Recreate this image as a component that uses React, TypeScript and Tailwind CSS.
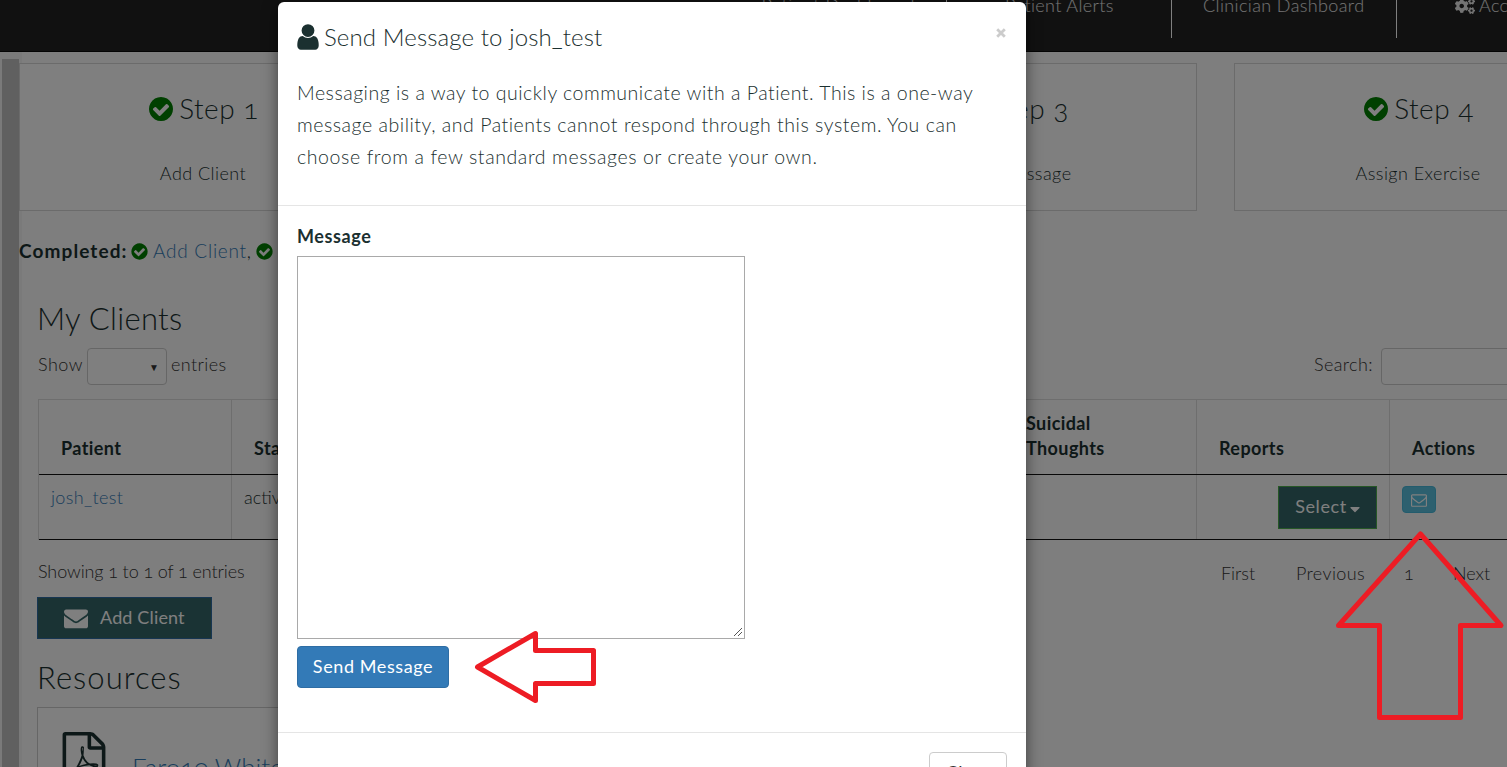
import React from "react";
import { FaCogs, FaCaretDown } from "react-icons/fa";

function Glyph({ d, className }: { d: string; className: string }) {
  return (
    <svg viewBox="0 0 1792 1792" fill="currentColor" className={className} aria-hidden="true">
      <path d={d} />
    </svg>
  );
}

const CHECK =
  "M1412 734q0-28-18-46l-91-90q-19-19-45-19t-45 19l-408 407-226-226q-19-19-45-19t-45 19l-91 90q-18 18-18 46 0 27 18 45l362 362q19 19 45 19 27 0 46-19l543-543q18-18 18-45zm252 162q0 209-103 385.5t-279.5 279.5-385.5 103-385.5-103-279.5-279.5-103-385.5 103-385.5 279.5-279.5 385.5-103 385.5 103 279.5 279.5 103 385.5z";
const USER =
  "M1536 1399q0 109-62.5 187t-150.5 78h-854q-88 0-150.5-78t-62.5-187q0-85 8.5-160.5t31.5-152 58.5-131 94-89 134.5-34.5q131 128 313 128t313-128q76 0 134.5 34.5t94 89 58.5 131 31.5 152 8.5 160.5zm-256-887q0 159-112.5 271.5t-271.5 112.5-271.5-112.5-112.5-271.5 112.5-271.5 271.5-112.5 271.5 112.5 112.5 271.5z";
const ENVELOPE =
  "M1792 710v794q0 66-47 113t-113 47h-1472q-66 0-113-47t-47-113v-794q44 49 101 87 362 246 497 345 57 42 92.5 65.5t94.5 48 110 24.5h2q51 0 110-24.5t94.5-48 92.5-65.5q170-123 498-345 57-39 100-87zm0-294q0 79-49 151t-122 123q-376 261-468 325-10 7-42.5 31t-54 38.5-52 32.5-57.5 27-50 9h-2q-23 0-50-9t-57.5-27-52-32.5-54-38.5-42.5-31q-91-64-262-182.5t-205-142.5q-62-42-117-115.5t-55-136.5q0-78 41.5-130t118.5-52h1472q65 0 112.5 47t47.5 113z";
const ENVELOPE_O =
  "M1664 1504v-768q-32 36-69 66-268 206-426 338-51 43-83 67t-86.5 48.5-102.5 24.5h-2q-48 0-102.5-24.5t-86.5-48.5-83-67q-158-132-426-338-37-30-69-66v768q0 13 9.5 22.5t22.5 9.5h1472q13 0 22.5-9.5t9.5-22.5zm0-1051v-24.5l-.5-13-3-12.5-5.5-9-9-7.5-14-2.5h-1472q-13 0-22.5 9.5t-9.5 22.5q0 168 147 284 193 152 401 317 6 5 35 29.5t46 37.5 44.5 31.5 50.5 27.5 43 9h2q20 0 43-9t50.5-27.5 44.5-31.5 46-37.5 35-29.5q208-165 401-317 54-43 100.5-115.5t46.5-131.5zm128-37v1088q0 66-47 113t-113 47h-1472q-66 0-113-47t-47-113v-1088q0-66 47-113t113-47h1472q66 0 113 47t47 113z";
const FILE_PDF =
  "M1596 380q28 28 48 76t20 88v1152q0 40-28 68t-68 28h-1344q-40 0-68-28t-28-68v-1600q0-40 28-68t68-28h896q40 0 88 20t76 48zm-444-244v376h376q-10-29-22-41l-313-313q-12-12-41-22zm384 1528v-1024h-416q-40 0-68-28t-28-68v-416h-768v1536h1280zm-514-593q33 26 84 56 59-7 117-7 147 0 177 49 16 22 2 52 0 1-1 2l-2 2v1q-6 38-71 38-48 0-115-20t-130-53q-221 24-392 83-153 262-242 262-15 0-28-7l-24-12q-1-1-6-5-10-10-6-36 9-40 56-91.5t132-96.5q14-9 23 6 2 2 2 4 52-85 107-197 68-136 104-262-24-82-30.5-159.5t6.5-127.5q11-40 42-40h22q23 0 35 15 18 21 9 68-2 6-4 8 1 3 1 8v30q-2 123-14 192 55 164 146 238zm-576 411q52-24 137-158-51 40-87.5 84t-49.5 74zm398-920q-15 42-2 132 1-7 7-44 0-3 7-43 1-4 4-8-1-1-1-2-1-2-1-3-1-22-13-36 0 1-1 2v2zm-124 661q135-54 284-81-2-1-13-9.5t-16-13.5q-76-67-127-176-27 86-83 197-30 56-45 83zm646-16q-24-24-140-24 76 28 124 28 14 0 18-1 0-1-2-3z";

const steps = [
  { title: "Step 1", label: "Add Client" },
  { title: "Step 2", label: "" },
  { title: "Step 3", label: "Send Message" },
  { title: "Step 4", label: "Assign Exercise" },
];

const columns = ["Patient", "Status", "", "", "", "Suicidal Thoughts", "Reports", "Actions"];

function NavBar() {
  return (
    <header className="flex h-[52px] shrink-0 items-start border-b border-[#080808] bg-[#222] text-lg leading-5 text-white/90">
      <div className="flex h-[38px] w-[947px] shrink-0 justify-end border-r border-white pr-[31px]">
        <span className="-mt-[5px] tracking-[0.6px]">Patient Dashboard</span>
      </div>
      <div className="flex h-[38px] w-[225px] shrink-0 border-r border-white pl-[58px]">
        <span className="-mt-[5px] tracking-[0.35px]">Patient Alerts</span>
      </div>
      <div className="flex h-[38px] w-[225px] shrink-0 border-r border-white pl-[31px]">
        <span className="-mt-[5px] tracking-[0.38px]">Clinician Dashboard</span>
      </div>
      <div className="flex shrink-0 gap-1 pl-[58px]">
        <FaCogs className="-mt-[3px] h-[18px] w-5" />
        <span className="-mt-[5px] tracking-[0.35px]">Account</span>
      </div>
    </header>
  );
}

function Steps() {
  return (
    <section className="flex gap-[37px] pt-[11px]">
      {steps.map((s) => (
        <div key={s.title} className="flex h-[148px] w-[368px] shrink-0 flex-col items-center border border-[#d6d6d6] bg-white">
          <div className="mt-[26px] flex h-9 items-center gap-1">
            <Glyph d={CHECK} className="mt-0.5 h-7 w-7 text-[#008000]" />
            <span className="text-[28px] tracking-[0.5px]">{s.title}</span>
          </div>
          <div className="mt-[33px] text-lg tracking-[0.45px]">{s.label}</div>
        </div>
      ))}
    </section>
  );
}

function ClientsTable() {
  return (
    <div className="mt-3.5 w-[1546px] border-l border-t border-[#ddd]">
      <div className="flex h-[75px] border-b border-[#111]">
        {columns.map((c, i) => (
          <div key={i} className="flex w-[193px] shrink-0 items-end border-r border-[#ddd] pb-[13px] pl-[22px] pr-8 text-lg font-bold leading-[25px] tracking-[0.4px]">
            {c}
          </div>
        ))}
      </div>
      <div className="flex h-[65px] border-b border-[#111] text-lg">
        <div className="w-[193px] shrink-0 border-r border-[#ddd] pl-3 pt-2 tracking-[0.35px] text-[#337ab7]">josh_test</div>
        <div className="w-[193px] shrink-0 border-r border-[#ddd] pl-3 pt-2">active</div>
        {[2, 3, 4, 5].map((i) => (
          <div key={i} className="w-[193px] shrink-0 border-r border-[#ddd]" />
        ))}
        <div className="flex w-[193px] shrink-0 justify-end border-r border-[#ddd] pr-3 pt-[11px]">
          <button className="flex h-[43px] w-[99px] items-center justify-center gap-[3px] border border-[#4cae4c] bg-[#356668] pb-[3px] font-normal tracking-[0.6px] text-white">
            Select <FaCaretDown className="mt-[5px] h-4 w-2.5" />
          </button>
        </div>
        <div className="w-[193px] shrink-0 pl-3 pt-[11px]">
          <button className="flex h-[27px] w-[34px] items-center justify-center rounded border border-[#46b8da] bg-[#5bc0de] text-white">
            <Glyph d={ENVELOPE_O} className="h-4 w-4" />
          </button>
        </div>
      </div>
    </div>
  );
}

function Dashboard() {
  return (
    <div className="flex h-[715px]">
      <div className="w-[19px] shrink-0 bg-[#f4f4f4] pl-0.5 pt-[7px]">
        <div className="h-full bg-[#c1c1c1]" />
      </div>
      <main className="min-w-0 flex-1 bg-[linear-gradient(to_right,#f5f5f5_3px,#fcfcfc_3px)]">
        <Steps />
        <div className="mt-[26px] flex h-7 items-center text-[19px]">
          <span className="w-[111px] font-bold tracking-[1.1px]">Completed:</span>
          <Glyph d={CHECK} className="h-[19px] w-[19px] shrink-0 text-[#008000]" />
          <span className="ml-1 tracking-[0.75px] text-[#337ab7]">Add Client</span>
          <span>,</span>
          <Glyph d={CHECK} className="ml-1 h-[19px] w-[19px] shrink-0 text-[#008000]" />
        </div>
        <div className="pl-[19px]">
          <h2 className="-ml-px mt-[35px] h-9 text-[31px] leading-9 tracking-[0.3px]">My Clients</h2>
          <div className="mt-3 flex h-[37px] text-lg leading-[33px] text-[#333]">
            <span className="w-[49px] shrink-0 tracking-[0.5px]">Show</span>
            <div className="flex w-20 shrink-0 items-center justify-end rounded border border-[#ccc] bg-white pr-[7px]">
              <span className="text-[10px] leading-none">▼</span>
            </div>
            <span className="ml-1 w-[1143px] shrink-0 tracking-[0.4px]">entries</span>
            <span className="w-[67px] shrink-0 tracking-[0.4px]">Search:</span>
            <div className="w-[200px] shrink-0 rounded border border-[#ccc] bg-white" />
          </div>
          <ClientsTable />
          <div className="mt-[17px] flex h-7 text-lg text-[#333]">
            <span className="w-[1183px] shrink-0 tracking-[-0.1px]">Showing 1 to 1 of 1 entries</span>
            <span className="w-[75px] shrink-0 pt-0.5">First</span>
            <span className="w-[108px] shrink-0 pt-0.5 tracking-[0.4px]">Previous</span>
            <span className="w-[49px] shrink-0 pt-0.5">1</span>
            <span className="pt-0.5">Next</span>
          </div>
          <button className="-ml-px mt-3 flex h-[42px] w-[175px] items-center border border-[#2e6da4] bg-[#356668] pl-[26px] text-lg font-normal text-white">
            <Glyph d={ENVELOPE} className="mr-3 h-6 w-6" />
            <span className="pb-[3px] tracking-[0.15px]">Add Client</span>
          </button>
          <h2 className="-ml-px mt-[20px] h-9 text-[31px] leading-9 tracking-[1.05px]">Resources</h2>
          <div className="-ml-px mt-3 flex h-[120px] w-[420px] border border-[#ccc] bg-white pl-[21px] pt-6">
            <Glyph d={FILE_PDF} className="h-[50px] w-[50px] shrink-0" />
            <span className="ml-[23px] mt-[16px] text-[26px] text-[#337ab7]">Faro10 White</span>
          </div>
        </div>
      </main>
    </div>
  );
}

function MessageDialog() {
  return (
    <div className="absolute left-[278px] top-[2px] h-[820px] w-[748px] rounded-md bg-white shadow-[0_5px_15px_rgba(0,0,0,0.5)]">
      <div className="h-[204px] border-b border-[#e5e5e5] px-[19px] pt-[19px]">
        <div className="flex h-8 items-center">
          <Glyph d={USER} className="-ml-1 h-[30px] w-[30px]" />
          <h4 className="ml-px text-2xl tracking-[0.12px]">Send Message to josh_test</h4>
          <svg viewBox="0 0 10 10" className="mb-2 ml-auto mr-px h-2.5 w-2.5 text-[#ccc]" aria-hidden="true">
            <path d="M1.200 1.200 8.800 8.800M8.800 1.200 1.200 8.800" stroke="currentColor" strokeWidth="2.8" />
          </svg>
        </div>
        <p className="mt-6 whitespace-nowrap text-[19.5px] leading-8 tracking-[0.51px]">
          <span className="block">Messaging is a way to quickly communicate with a Patient. This is a one-way</span>
          <span className="block tracking-[0.54px]">message ability, and Patients cannot respond through this system. You can</span>
          <span className="block tracking-[0.6px]">choose from a few standard messages or create your own.</span>
        </p>
      </div>
      <div className="h-[527px] border-b border-[#e5e5e5] px-[19px] pt-4">
        <label className="block h-[34px] text-lg font-bold tracking-[0.6px]">Message</label>
        <div className="flex h-[383px] w-[448px] items-end justify-end border border-[#a9a9a9]">
          <svg viewBox="0 0 10 10" className="mb-px mr-px h-2.5 w-2.5" aria-hidden="true">
            <path d="M1 9 9 1M5 9l4-4" stroke="#555" strokeWidth="1" />
          </svg>
        </div>
        <button className="mt-[7px] flex h-[42px] w-[152px] items-center justify-center rounded border border-[#2e6da4] bg-[#337ab7] pb-[3px] text-lg font-normal tracking-[0.6px] text-white">
          Send Message
        </button>
      </div>
      <div className="flex justify-end px-[19px] pt-[19px]">
        <button className="flex h-[42px] w-[78px] justify-center rounded border border-[#ccc] pt-[5px] text-lg font-normal text-[#333]">Close</button>
      </div>
    </div>
  );
}

function Arrows() {
  return (
    <svg viewBox="0 0 1507 767" className="pointer-events-none absolute inset-0 h-[767px] w-[1507px]" fill="none" stroke="#ed1c24" strokeWidth="5" strokeLinejoin="round" aria-hidden="true">
      <path d="M477.500 667 535.500 633.500V650.500H593.500V683.500H535.500V700.500Z" />
      <path d="M1420.500 534 1501 625.500H1460.500V717.500H1379.500V625.500H1338.500Z" />
    </svg>
  );
}

export default function App() {
  return (
    <div className="relative h-[767px] w-[1507px] overflow-hidden bg-white font-['Lato',sans-serif] font-light oldstyle-nums text-[#1b3030]">
      <NavBar />
      <Dashboard />
      <div className="absolute inset-0 bg-black/50" />
      <MessageDialog />
      <Arrows />
    </div>
  );
}
